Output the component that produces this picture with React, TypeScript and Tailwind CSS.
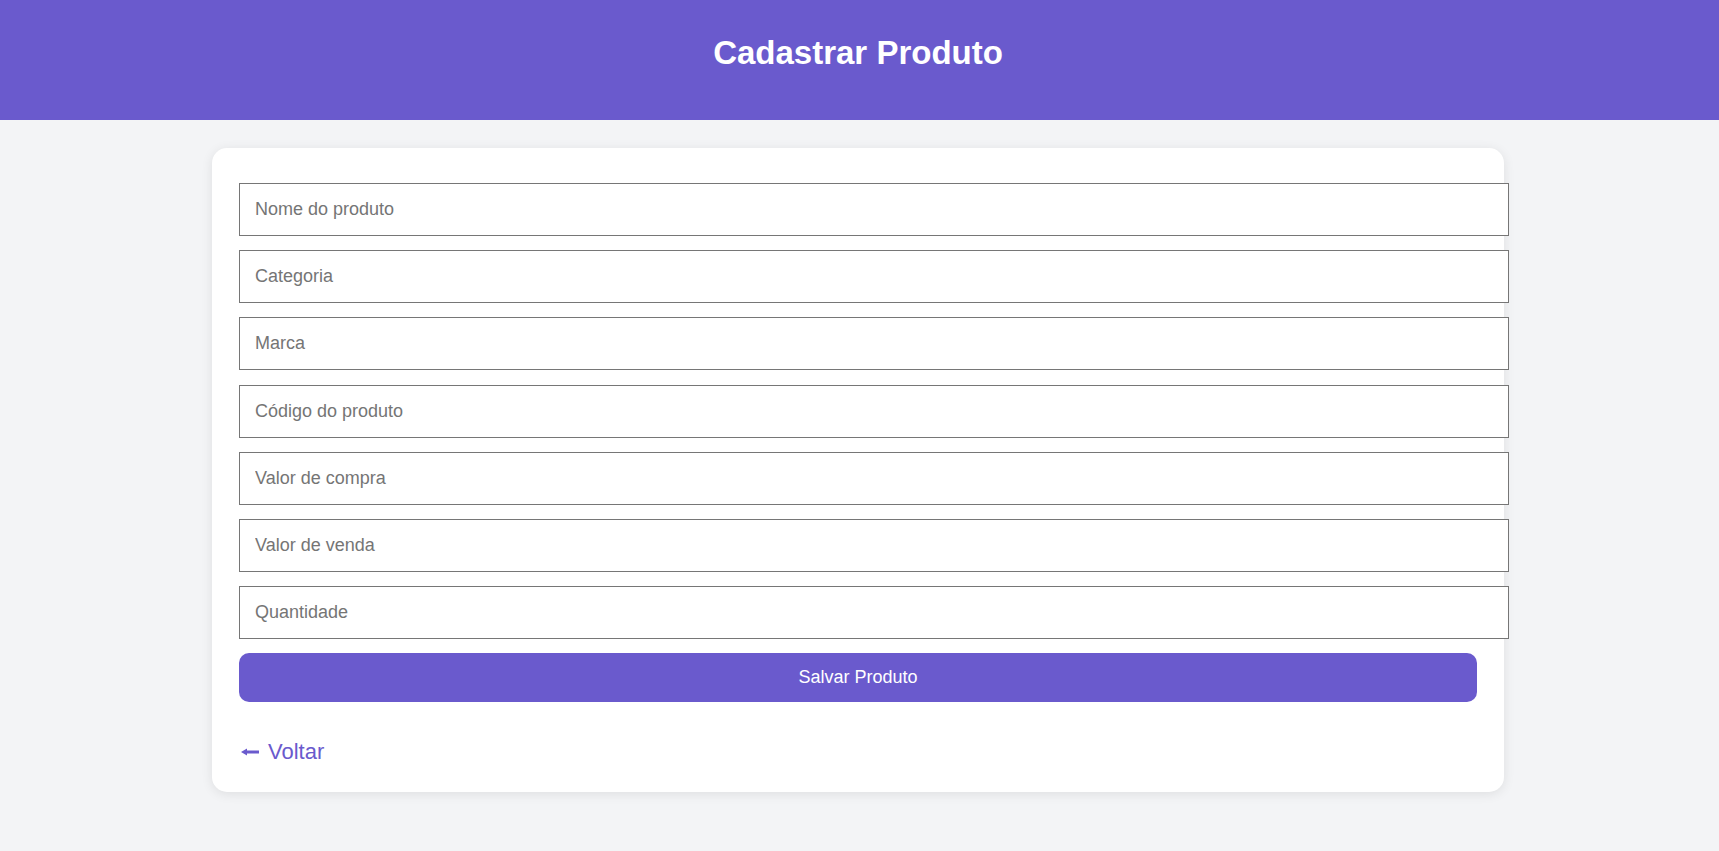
import React from "react";

const FIELDS = [
  "Nome do produto",
  "Categoria",
  "Marca",
  "Código do produto",
  "Valor de compra",
  "Valor de venda",
  "Quantidade",
];

export default function App() {
  return (
    <div
      id="page"
      className="min-h-screen bg-[#f3f4f6] font-['Liberation_Sans',Arial,sans-serif]"
    >
      <header id="page-header" className="h-[120px] bg-[#6a5acd] pt-[34px] pr-[3px] text-center">
        <h1 className="text-[33px] font-bold leading-[38px] text-white">Cadastrar Produto</h1>
      </header>

      <div className="pr-[3px]">
        {/* Form card */}
        <main
          id="product-card"
          className="mx-auto mt-[28px] w-[1292px] rounded-[15px] bg-white px-[27px] pt-[35px] pb-[28px] shadow-[0_2px_12px_rgba(0,0,0,0.09)]"
        >
          <form id="product-form" className="flex flex-col gap-[14.2px]" onSubmit={(e) => e.preventDefault()}>
            {FIELDS.map((label, idx) => (
              <input
                key={label}
                id={`field-${idx}`}
                type="text"
                placeholder={label}
                className="box-content block h-[21px] w-full border border-[#767676] bg-white px-[15px] py-[15px] text-[18px] leading-[21px] text-[#222] placeholder:text-[#757575] outline-none"
              />
            ))}
            <button
              id="save-product"
              type="submit"
              className="h-[49px] w-full rounded-[10px] bg-[#6a5acd] text-[18px] text-white"
            >
              Salvar Produto
            </button>
          </form>

          <a
            id="back-link"
            href="#"
            className="mt-[37px] ml-[2px] flex w-fit items-center gap-[9px] text-[22px] leading-[25px] text-[#6a5acd]"
          >
            <svg width="18" height="8" viewBox="0 0 18 8" fill="currentColor" aria-hidden="true">
              <polygon points="0,4 6,0.5 6,7.5" />
              <rect x="5" y="2.5" width="13" height="3" />
            </svg>
            <span>Voltar</span>
          </a>
        </main>
      </div>
    </div>
  );
}
